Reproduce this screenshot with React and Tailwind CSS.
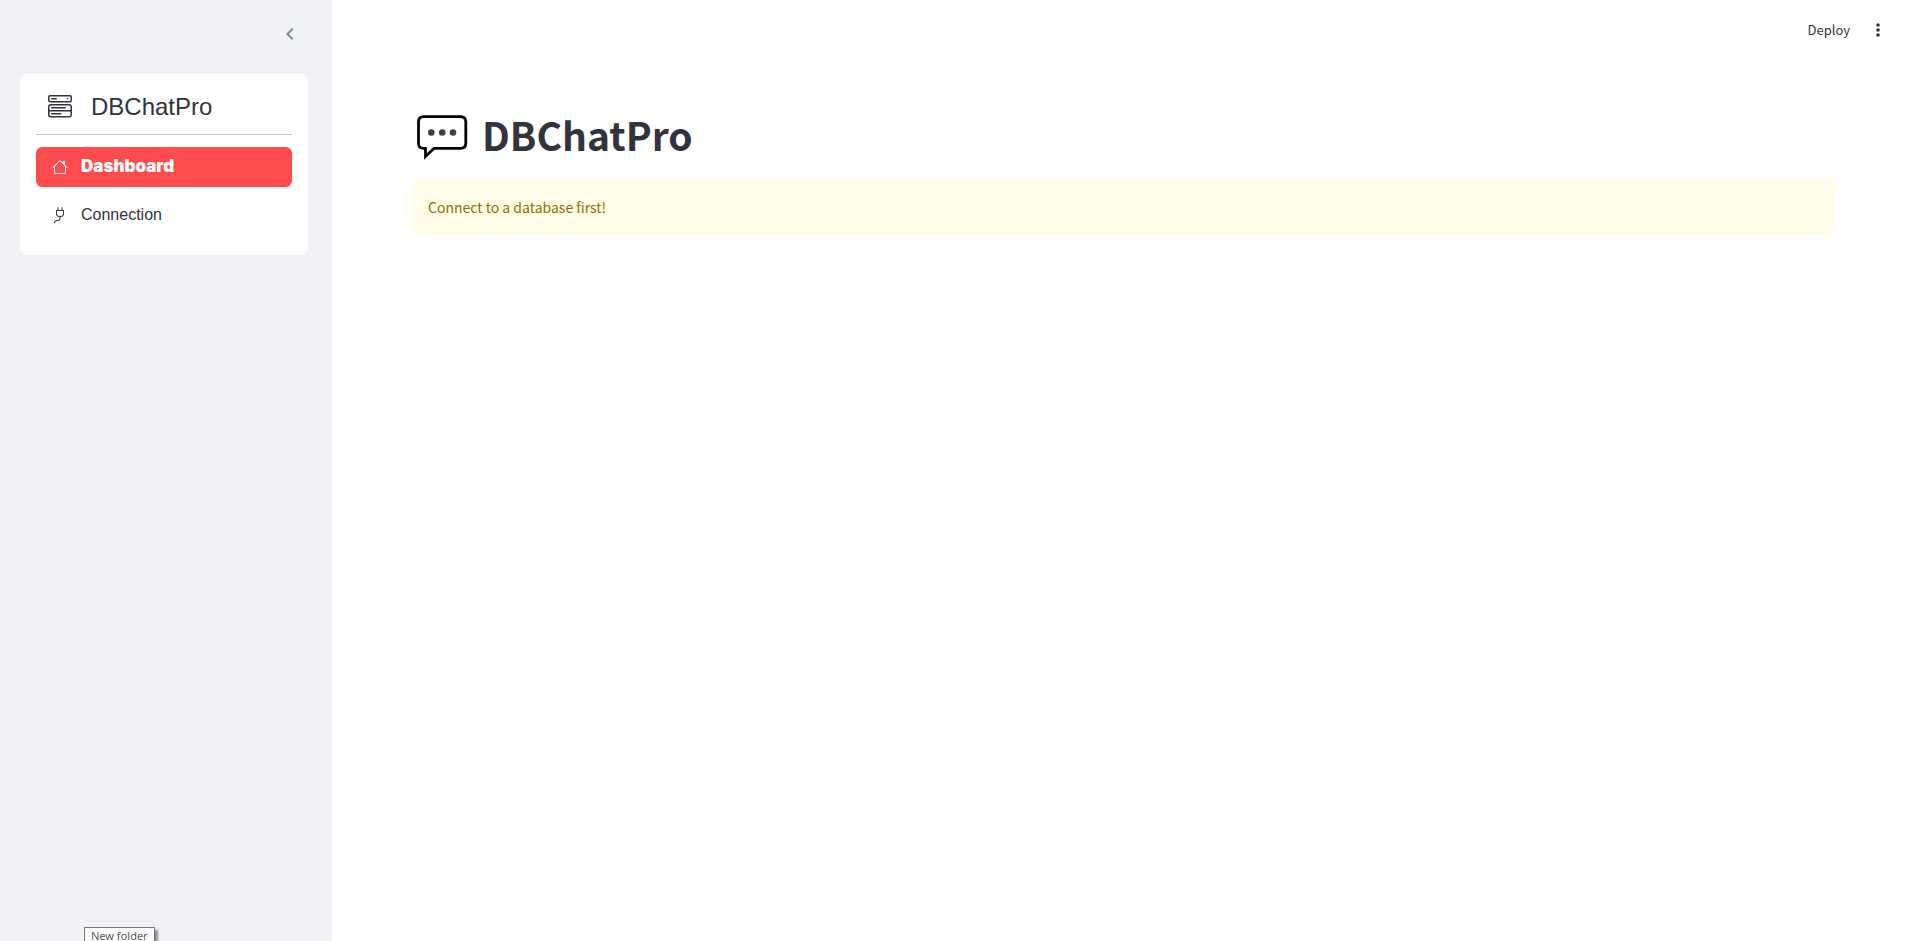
import { BsHouse, BsMenuButtonWide, BsPlug } from "react-icons/bs";
import { MdChevronLeft } from "react-icons/md";

function SpeechBubble() {
  return (
    <svg viewBox="0 0 60 60" className="size-[60px] shrink-0" aria-hidden="true">
      <path
        d="M11.500 12.700H48.500Q53.800 12.700 53.800 18V39.200Q53.800 44.300 48.500 44.300H22L13.500 52.500V44.300H11.500Q6.500 44.300 6.500 39.200V18Q6.500 12.700 11.500 12.700Z"
        fill="#fff"
        stroke="#000"
        strokeWidth="2.800"
      />
      <g fill="#3f3f3f">
        <circle cx="19.300" cy="28.500" r="3.300" />
        <circle cx="30.200" cy="28.500" r="3.300" />
        <circle cx="41" cy="28.500" r="3.300" />
      </g>
    </svg>
  );
}

function Sidebar() {
  return (
    <aside className="flex w-[332px] shrink-0 flex-col bg-[#f0f2f6] pr-6 pl-5">
      <div className="flex h-[74px] items-start justify-end pt-[22px] pr-1.5">
        <button aria-label="Collapse sidebar" className="text-[#808495]">
          <MdChevronLeft size={24} />
        </button>
      </div>
      <nav className="rounded-lg bg-white px-4 pb-5 font-['Liberation_Sans',Arial,sans-serif] text-[#31333f]">
        <div className="flex h-[61px] items-center gap-[19px] border-b border-[#c8c8c8] pt-1.5 pl-3 text-2xl">
          <BsMenuButtonWide size={24} />
          <span>DBChatPro</span>
        </div>
        <ul className="mt-3 flex flex-col gap-2 text-base">
          <li>
            <a
              href="#dashboard"
              className="flex h-10 items-center gap-[13px] rounded-md bg-[#ff4b4b] px-4 font-['Inter','Liberation_Sans',sans-serif] text-[17px] font-black text-white"
            >
              <BsHouse size={16} />
              Dashboard
            </a>
          </li>
          <li>
            <a href="#connection" className="flex h-10 items-center gap-[13px] rounded-md px-4">
              <BsPlug size={16} />
              Connection
            </a>
          </li>
        </ul>
      </nav>
    </aside>
  );
}

export default function App() {
  return (
    <div className="relative flex min-h-screen overflow-hidden bg-white font-['Noto_Sans_CJK_SC',sans-serif] text-[#31333f]">
      <Sidebar />
      <div className="flex min-w-0 flex-1 flex-col">
        <header className="flex h-[60px] items-center justify-end gap-5 pr-7">
          <button className="text-[13px]">Deploy</button>
          <button aria-label="Main menu">
            <svg viewBox="0 0 16 16" className="size-4" fill="#31333f" aria-hidden="true">
              <circle cx="8" cy="3" r="1.800" />
              <circle cx="8" cy="8" r="1.800" />
              <circle cx="8" cy="13" r="1.800" />
            </svg>
          </button>
        </header>
        <main className="flex flex-col pt-11 pr-[78px] pl-20">
          <h1 className="flex h-[75px] items-start gap-2.5 text-[39px] leading-[60px] font-bold">
            <SpeechBubble />
            DBChatPro
          </h1>
          <div role="alert" className="flex h-14 items-center rounded-lg bg-[#fffce7] px-4 text-sm text-[#926c05]">
            Connect to a database first!
          </div>
        </main>
      </div>
      <div
        role="tooltip"
        className="absolute -bottom-1 left-[84px] border border-[#767676] bg-white px-1.5 font-['Noto_Sans',sans-serif] text-[11px] leading-4 text-[#575757] shadow-[3px_3px_2px_#00000066]"
      >
        New folder
      </div>
    </div>
  );
}
